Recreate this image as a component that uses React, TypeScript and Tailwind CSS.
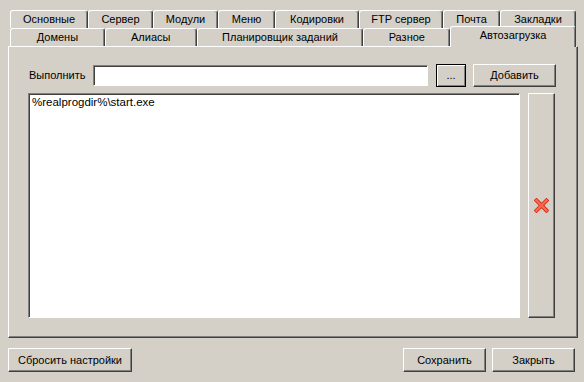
import React from 'react'

const raised =
  'bg-[#d4d0c8] border border-t-white border-l-white border-r-[#404040] border-b-[#404040] shadow-[inset_-1px_-1px_#808080]'
const sunken =
  'bg-white border border-t-[#808080] border-l-[#808080] border-r-white border-b-white shadow-[inset_1px_1px_#404040]'

interface TabProps {
  label: string
  width: string
}

function Tab({ label, width }: TabProps) {
  return (
    <div
      className={`${width} h-full flex items-center justify-center border-t border-l border-r border-t-white border-l-white border-r-[#404040] rounded-t-[3px] shadow-[inset_-1px_0_#808080] bg-[#d4d0c8]`}
    >
      {label}
    </div>
  )
}

function Btn({ className, children }: { className: string; children?: React.ReactNode }) {
  return (
    <button type="button" className={`${raised} flex items-center justify-center text-[11px] text-black ${className}`}>
      {children}
    </button>
  )
}

export default function App() {
  return (
    <div className="w-[584px] h-[382px] bg-[#d4d0c8] pt-[10px] px-[8px] text-[11px] text-black font-['Liberation_Sans',Arial,sans-serif] overflow-hidden">
      {/* tabs */}
      <div className="pl-[2px]">
        <div className="flex h-[18px]">
          <Tab label="Основные" width="w-[78px]" />
          <Tab label="Сервер" width="w-[65px]" />
          <Tab label="Модули" width="w-[65px]" />
          <Tab label="Меню" width="w-[57px]" />
          <Tab label="Кодировки" width="w-[84px]" />
          <Tab label="FTP сервер" width="w-[84px]" />
          <Tab label="Почта" width="w-[57px]" />
          <Tab label="Закладки" width="w-[76px]" />
        </div>
        <div className="flex h-[18px]">
          <Tab label="Домены" width="w-[95px]" />
          <Tab label="Алиасы" width="w-[92px]" />
          <Tab label="Планировщик заданий" width="w-[167px]" />
          <Tab label="Разное" width="w-[87px]" />
          <div className="relative z-10 w-[126px] h-[21px] -mt-[2px] pb-[3px] flex items-center justify-center border-t border-l border-r border-t-white border-l-white border-r-[#404040] rounded-t-[3px] shadow-[inset_-1px_0_#808080] bg-[#d4d0c8]">
            Автозагрузка
          </div>
        </div>
      </div>

      {/* panel */}
      <div className={`${raised} w-[570px] h-[292px] pl-[19px] pt-[16px]`}>
        <div className="flex items-center h-[24px]">
          <span className="w-[65px] pl-[1px]">Выполнить</span>
          <div className={`${sunken} w-[335px] h-[21px]`} />
          <button
            type="button"
            className="ml-[8px] w-[30px] h-[23px] border border-black bg-[#d4d0c8] shadow-[inset_1px_1px_white,inset_-1px_-1px_#808080] flex items-center justify-center text-[11px]"
          >
            ...
          </button>
          <Btn className="ml-[7px] w-[83px] h-[23px]">Добавить</Btn>
        </div>
        <div className="flex mt-[6px] gap-[8px]">
          <div className={`${sunken} w-[492px] h-[225px] pl-[3px] pt-[1px] leading-[14px] text-[11.5px]`}>
            %realprogdir%\start.exe
          </div>
          <Btn className="w-[27px] h-[225px]">
            <svg width="15" height="15" viewBox="0 0 15 15">
              <path d="M2.5 2.5 L12.5 12.5 M12.5 2.5 L2.5 12.5" stroke="#c8301c" strokeWidth="4" strokeLinecap="square" />
              <path d="M2.5 2.5 L12.5 12.5 M12.5 2.5 L2.5 12.5" stroke="#fb6a4c" strokeWidth="2.4" strokeLinecap="square" />
            </svg>
          </Btn>
        </div>
      </div>

      {/* bottom buttons */}
      <div className="flex mt-[10px]">
        <Btn className="w-[124px] h-[24px]">Сбросить настройки</Btn>
        <div className="flex-1" />
        <Btn className="w-[83px] h-[24px]">Сохранить</Btn>
        <Btn className="ml-[6px] w-[83px] h-[24px] mr-[1px]">Закрыть</Btn>
      </div>
    </div>
  )
}
